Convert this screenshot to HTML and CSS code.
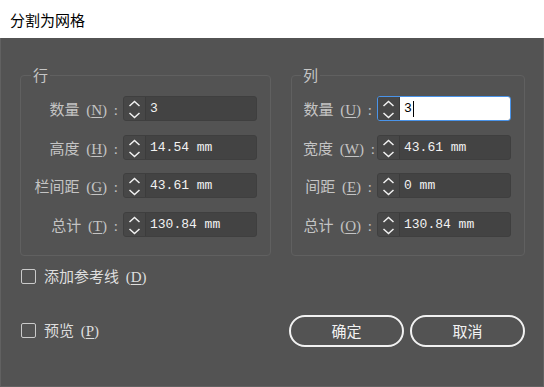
FILE: index.html
```html
<!DOCTYPE html>
<html lang="zh-CN">
<head>
  <meta charset="UTF-8" />
  <meta name="viewport" content="width=device-width, initial-scale=1.0"/>
  <title>分割为网格</title>
  <link rel="stylesheet" href="styles.css">
</head>
<body>

  <div class="window">
    <div class="titlebar">分割为网格</div>

    <div class="content">
      <div class="groups">
        <!-- rows -->
        <fieldset class="group group-rows">
          <legend>行</legend>
          <div class="fields">
            <span class="label">数量 (<u>N</u>) :</span>
            <div class="spin">
              <span class="arrows"><svg width="21" height="23" viewBox="0 0 21 23"><polyline points="5.5,9 10.5,4.5 15.5,9"/><polyline points="5.5,16 10.5,20.5 15.5,16"/></svg></span>
              <span class="value">3</span>
            </div>

            <span class="label">高度 (<u>H</u>) :</span>
            <div class="spin">
              <span class="arrows"><svg width="21" height="23" viewBox="0 0 21 23"><polyline points="5.5,9 10.5,4.5 15.5,9"/><polyline points="5.5,16 10.5,20.5 15.5,16"/></svg></span>
              <span class="value">14.54 mm</span>
            </div>

            <span class="label">栏间距 (<u>G</u>) :</span>
            <div class="spin">
              <span class="arrows"><svg width="21" height="23" viewBox="0 0 21 23"><polyline points="5.5,9 10.5,4.5 15.5,9"/><polyline points="5.5,16 10.5,20.5 15.5,16"/></svg></span>
              <span class="value">43.61 mm</span>
            </div>

            <span class="label">总计 (<u>T</u>) :</span>
            <div class="spin">
              <span class="arrows"><svg width="21" height="23" viewBox="0 0 21 23"><polyline points="5.5,9 10.5,4.5 15.5,9"/><polyline points="5.5,16 10.5,20.5 15.5,16"/></svg></span>
              <span class="value">130.84 mm</span>
            </div>
          </div>
        </fieldset>

        <!-- columns -->
        <fieldset class="group group-cols">
          <legend>列</legend>
          <div class="fields">
            <span class="label">数量 (<u>U</u>) :</span>
            <div class="spin focused">
              <span class="arrows"><svg width="21" height="23" viewBox="0 0 21 23"><polyline points="5.5,9 10.5,4.5 15.5,9"/><polyline points="5.5,16 10.5,20.5 15.5,16"/></svg></span>
              <span class="value">3<span class="caret"></span></span>
            </div>

            <span class="label">宽度 (<u>W</u>) :</span>
            <div class="spin">
              <span class="arrows"><svg width="21" height="23" viewBox="0 0 21 23"><polyline points="5.5,9 10.5,4.5 15.5,9"/><polyline points="5.5,16 10.5,20.5 15.5,16"/></svg></span>
              <span class="value">43.61 mm</span>
            </div>

            <span class="label">间距 (<u>E</u>) :</span>
            <div class="spin">
              <span class="arrows"><svg width="21" height="23" viewBox="0 0 21 23"><polyline points="5.5,9 10.5,4.5 15.5,9"/><polyline points="5.5,16 10.5,20.5 15.5,16"/></svg></span>
              <span class="value">0 mm</span>
            </div>

            <span class="label">总计 (<u>O</u>) :</span>
            <div class="spin">
              <span class="arrows"><svg width="21" height="23" viewBox="0 0 21 23"><polyline points="5.5,9 10.5,4.5 15.5,9"/><polyline points="5.5,16 10.5,20.5 15.5,16"/></svg></span>
              <span class="value">130.84 mm</span>
            </div>
          </div>
        </fieldset>
      </div>

      <label class="check check-guides"><span class="box"></span><span class="check-text">添加参考线 (<u>D</u>)</span></label>

      <div class="bottom">
        <label class="check"><span class="box"></span><span class="check-text">预览 (<u>P</u>)</span></label>
        <div class="buttons">
          <button class="btn">确定</button>
          <button class="btn">取消</button>
        </div>
      </div>
    </div>
  </div>

</body>
</html>
```

FILE: styles.css
```css
body {
  margin: 0;
  background-color: #535353;
  font-family: "Noto Sans CJK SC", sans-serif;
}

.window {
  width: 544px;
  height: 387px;
  display: flex;
  flex-direction: column;
}

.titlebar {
  height: 38px;
  flex-shrink: 0;
  display: flex;
  align-items: center;
  padding-left: 10px;
  background-color: #fff;
  color: #000;
  font-size: 15px;
}

.content {
  flex: 1;
  border: 1px solid #616161;
  border-top: none;
  padding: 29px 18px 0 19px;
}

.groups {
  display: flex;
  gap: 20px;
}

.group {
  margin: 0;
  min-width: 0;
  box-sizing: border-box;
  border: 1px solid #606060;
  border-radius: 4px;
  padding: 13px 0 18px 12px;
}

.group-rows {
  width: 251px;
}

.group-cols {
  width: 234px;
  padding-left: 11px;
}

.group legend {
  padding: 0 2px;
  margin-left: -2px;
  font-size: 15px;
  line-height: 16px;
  color: #c6c6c6;
}

.fields {
  display: grid;
  grid-template-columns: 85px 134px;
  column-gap: 5px;
  row-gap: 13.67px;
  align-items: center;
}

.group-cols .fields {
  grid-template-columns: 69px 134px;
}

.label {
  text-align: right;
  white-space: nowrap;
  font-family: "Liberation Serif", "Noto Sans CJK SC", serif;
  font-size: 15px;
  word-spacing: 3px;
  color: #c4c4c4;
}

.label u,
.check u {
  text-underline-offset: 2px;
}

.spin {
  display: flex;
  height: 25px;
  box-sizing: border-box;
  border: 1px solid #3f3f3f;
  border-radius: 3px;
  background-color: #434343;
  overflow: hidden;
}

.arrows {
  width: 22px;
  flex-shrink: 0;
  box-sizing: border-box;
  border-right: 1px solid #3c3c3c;
  background-color: #474747;
  display: flex;
}

.arrows polyline {
  fill: none;
  stroke: #f0f0f0;
  stroke-width: 1.5;
}

.value {
  flex: 1;
  padding-left: 4px;
  font-family: "Liberation Mono", monospace;
  font-size: 13px;
  line-height: 23px;
  color: #f2f2f2;
}

.spin.focused {
  border-color: #4a94ea;
}

.spin.focused .value {
  background-color: #fff;
  color: #000;
}

.caret {
  display: inline-block;
  width: 1px;
  height: 16px;
  margin-left: 1px;
  background-color: #000;
  vertical-align: middle;
}

.check {
  display: flex;
  align-items: center;
  gap: 8px;
  margin-left: 1px;
  font-family: "Liberation Serif", "Noto Sans CJK SC", serif;
  font-size: 15px;
  line-height: 20px;
  color: #dedede;
}

.check-text {
  white-space: nowrap;
  word-spacing: 3px;
}

.check-guides {
  margin-top: 11px;
}

.box {
  width: 15px;
  height: 15px;
  box-sizing: border-box;
  border: 1px solid #cacaca;
  border-radius: 2px;
}

.bottom {
  margin-top: 28px;
  display: flex;
  justify-content: space-between;
  align-items: center;
}

.buttons {
  display: flex;
  gap: 6px;
}

.btn {
  width: 115px;
  height: 32px;
  padding: 0;
  background: none;
  border: 2px solid #f2f2f2;
  border-radius: 16px;
  color: #f2f2f2;
  font-family: "Noto Sans CJK SC", sans-serif;
  font-size: 15px;
}
```
